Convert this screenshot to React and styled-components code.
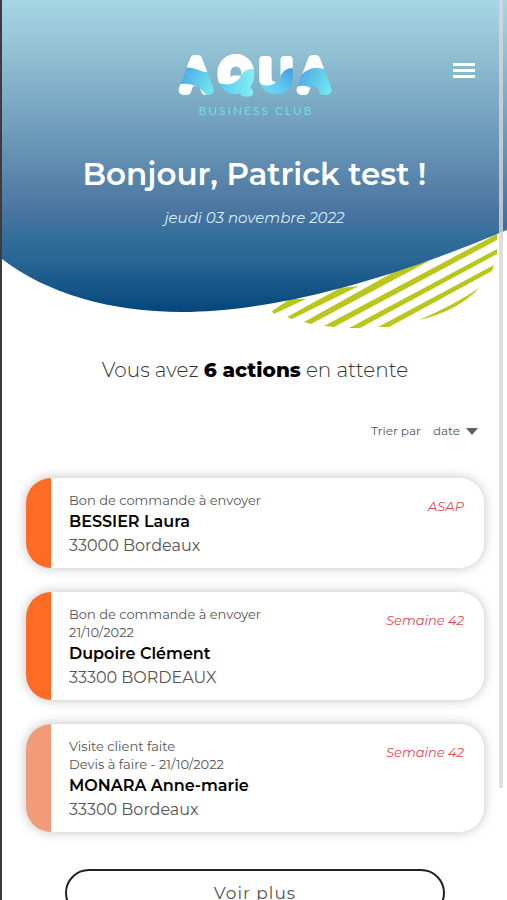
import { useState } from 'react';
import styled, { createGlobalStyle } from 'styled-components';

const actions = [
  {
    id: 1,
    steps: ['Bon de commande à envoyer'],
    name: 'BESSIER Laura',
    city: '33000 Bordeaux',
    due: 'ASAP',
    color: '#fe6b25',
  },
  {
    id: 2,
    steps: ['Bon de commande à envoyer', '21/10/2022'],
    name: 'Dupoire Clément',
    city: '33300 BORDEAUX',
    due: 'Semaine 42',
    color: '#fe6b25',
  },
  {
    id: 3,
    steps: ['Visite client faite', 'Devis à faire - 21/10/2022'],
    name: 'MONARA Anne-marie',
    city: '33300 Bordeaux',
    due: 'Semaine 42',
    color: '#f19b7b',
  },
];

const Logo = () => (
  <LogoSvg viewBox='0 0 156 66' role='img' aria-label='Aqua Business Club'>
    <defs>
      <linearGradient id='wave-blue' x1='0' y1='0' x2='1' y2='0.4'>
        <stop offset='0' stopColor='#4a9de0' />
        <stop offset='1' stopColor='#6fe6f2' />
      </linearGradient>
      <linearGradient id='wave-cyan' x1='0' y1='0' x2='1' y2='0'>
        <stop offset='0' stopColor='#56c8ea' />
        <stop offset='1' stopColor='#85f0f6' />
      </linearGradient>
      <linearGradient id='wave-deep' x1='0' y1='1' x2='1' y2='0'>
        <stop offset='0' stopColor='#78eaf5' />
        <stop offset='0.6' stopColor='#5cc4ee' />
        <stop offset='1' stopColor='#3d97e0' />
      </linearGradient>
      <mask id='logo-letters' maskUnits='userSpaceOnUse' x='0' y='0' width='156' height='50'>
        <LogoLetter x='19' y='38' $font='Roboto' $weight={300} $size={42} $stroke={10}>A</LogoLetter>
        <LogoLetter x='59' y='38' $font='Inter' $weight={500} $size={44} $stroke={8}>Q</LogoLetter>
        <LogoLetter x='99' y='38' $font='Montserrat' $weight={500} $size={43} $stroke={8}>U</LogoLetter>
        <LogoLetter x='137' y='38' $font='Roboto' $weight={300} $size={42} $stroke={10}>A</LogoLetter>
      </mask>
    </defs>
    <g mask='url(#logo-letters)'>
      <rect width='156' height='50' fill='#fff' />
      <path d='M0 20C8 12 18 17 24 19S34 20 39 17V50H34C28 38 16 28 0 33Z' fill='url(#wave-blue)' />
      <path d='M38 29C47 34 58 34 64 24C68 17 74 16 79 18V50H38Z' fill='url(#wave-cyan)' />
      <path d='M79 30C90 36 98 34 103 25C107 17 112 15 118 17V50H79Z' fill='url(#wave-deep)' />
      <path d='M118 26C126 23 130 15 140 16S150 18 156 18V50H148C140 37 128 30 118 36Z' fill='url(#wave-blue)' />
    </g>
    <LogoTagline x='79' y='63'>BUSINESS CLUB</LogoTagline>
  </LogoSvg>
);

const HeaderShape = () => (
  <HeaderSvg viewBox='0 0 505 330' preserveAspectRatio='none' aria-hidden='true'>
    <defs>
      <linearGradient id='header-sky' gradientUnits='userSpaceOnUse' x1='0' y1='0' x2='0' y2='312'>
        <stop offset='0' stopColor='#a5d6e3' />
        <stop offset='0.12' stopColor='#98c7d8' />
        <stop offset='0.45' stopColor='#6a98b8' />
        <stop offset='0.69' stopColor='#48739f' />
        <stop offset='0.75' stopColor='#35709b' />
        <stop offset='0.84' stopColor='#286594' />
        <stop offset='1' stopColor='#04467c' />
      </linearGradient>
    </defs>
    <g fill='#b9c71c'>
      <path d='M270 311L272 314L304 299L288 299Z' />
      <path d='M285 317L290 319L357 286L338 288Z' />
      <path d='M302 322L309 324L427 261L401 267Z' />
      <path d='M322 326L332 327L495 240V234Z' />
      <path d='M347 328H358L495 254V249Z' />
      <path d='M376 327H387L490 271L492 265Z' />
      <path d='M417 320Q452 305 477 288Q456 311 417 320Z' />
    </g>
    <path d='M0 0H505V230C358 292 252 312 180 312C108 312 44 293 0 259Z' fill='url(#header-sky)' />
  </HeaderSvg>
);

const ActionCard = ({ steps, name, city, due, color }) => (
  <Card $color={color}>
    <div>
      {steps.map(step => (
        <CardStep key={step}>{step}</CardStep>
      ))}
      <CardName>{name}</CardName>
      <CardCity>{city}</CardCity>
    </div>
    <CardDue>{due}</CardDue>
  </Card>
);

const App = () => {
  const [sort, setSort] = useState('date');

  return (
    <>
      <GlobalStyle />
      <Page>
        <Header>
          <HeaderShape />
          <TopBar>
            <Logo />
            <MenuButton type='button' aria-label='Menu'>
              <svg width='22' height='15' viewBox='0 0 22 15' fill='currentColor'>
                <rect width='22' height='3' />
                <rect y='6' width='22' height='3' />
                <rect y='12' width='22' height='3' />
              </svg>
            </MenuButton>
          </TopBar>
          <Title>Bonjour, Patrick test !</Title>
          <Today>jeudi 03 novembre 2022</Today>
        </Header>
        <Main>
          <Summary>
            Vous avez <strong>6 actions</strong> en attente
          </Summary>
          <SortBar>
            <label htmlFor='sort'>Trier par</label>
            <SortField>
              <SortSelect
                id='sort'
                value={sort}
                onChange={({ target }) => setSort(target.value)}
              >
                <option value='date'>date</option>
                <option value='nom'>nom</option>
              </SortSelect>
              <svg width='12' height='7' viewBox='0 0 12 7' fill='#606060'>
                <path d='M0 0H12L6 7Z' />
              </svg>
            </SortField>
          </SortBar>
          <CardList>
            {actions.map(action => (
              <ActionCard key={action.id} {...action} />
            ))}
          </CardList>
          <MoreButton type='button'>Voir plus</MoreButton>
        </Main>
        <ScrollThumb />
      </Page>
    </>
  );
};

const GlobalStyle = createGlobalStyle`
  * {
    box-sizing: border-box;
  }

  html {
    scrollbar-width: none;
  }

  body {
    margin: 0;
    background: #fff;
    color: #555;
    font-family: 'Montserrat', 'Inter', sans-serif;
  }

  h1, h2, p, ul {
    margin: 0;
    padding: 0;
  }

  button, select {
    font-family: inherit;
    color: inherit;
  }
`;

const Page = styled.div`
  min-height: 100vh;
  border-left: 2px solid #3b3b40;
`;

const Header = styled.header`
  position: relative;
  height: 330px;
  padding-top: 52px;
  color: #fff;
  text-align: center;
`;

const HeaderSvg = styled.svg`
  position: absolute;
  inset: 0;
  width: 100%;
  height: 100%;
`;

const TopBar = styled.div`
  position: relative;
  display: grid;
  grid-template-columns: 1fr auto 1fr;
  align-items: start;
  padding: 0 24px;
`;

const LogoSvg = styled.svg`
  grid-column: 2;
  width: 156px;
  height: 66px;
`;

const LogoLetter = styled.text`
  font-family: '${({ $font }) => $font}', sans-serif;
  font-size: ${({ $size }) => $size}px;
  font-weight: ${({ $weight }) => $weight};
  text-anchor: middle;
  fill: #fff;
  stroke: #fff;
  stroke-width: ${({ $stroke }) => $stroke}px;
  stroke-linejoin: round;
`;

const LogoTagline = styled.text`
  font-family: 'Lato', sans-serif;
  font-size: 12px;
  letter-spacing: 2px;
  text-anchor: middle;
  fill: #6fdde8;
`;

const MenuButton = styled.button`
  justify-self: end;
  display: flex;
  padding: 8px;
  margin-top: 3px;
  border: none;
  background: none;
  color: #fff;
  cursor: pointer;
`;

const Title = styled.h1`
  position: relative;
  margin-top: 36px;
  font-size: 31px;
  line-height: 40px;
  font-weight: 600;
`;

const Today = styled.p`
  position: relative;
  margin-top: 12px;
  font-size: 15px;
  line-height: 24px;
  font-style: italic;
  color: #d8ebfa;
`;

const Main = styled.main`
  display: flex;
  flex-direction: column;
  padding: 26px 23px 24px 24px;
`;

const Summary = styled.h2`
  font-size: 20px;
  line-height: 28px;
  font-weight: 300;
  color: #333;
  text-align: center;

  & strong {
    font-weight: 800;
    color: #000;
  }
`;

const SortBar = styled.div`
  display: flex;
  justify-content: flex-end;
  align-items: center;
  gap: 12px;
  margin-top: 37px;
  padding-right: 6px;
  font-size: 12px;
  line-height: 20px;
`;

const SortField = styled.div`
  display: flex;
  align-items: center;
  position: relative;

  & svg {
    position: absolute;
    right: 0;
    pointer-events: none;
  }
`;

const SortSelect = styled.select`
  appearance: none;
  field-sizing: content;
  border: none;
  padding: 0 18px 0 0;
  background: transparent;
  font-size: 12px;
  line-height: 20px;
  cursor: pointer;
`;

const CardList = styled.ul`
  display: flex;
  flex-direction: column;
  gap: 24px;
  margin-top: 37px;
  list-style: none;
`;

const Card = styled.li`
  display: flex;
  justify-content: space-between;
  padding: 13px 20px 11px 43px;
  border-radius: 25px;
  background: linear-gradient(to right, ${({ $color }) => $color} 25px, #fff 25px);
  box-shadow: 0 0 12px rgba(0, 0, 0, 0.25);
`;

const CardStep = styled.p`
  font-size: 13px;
  line-height: 18px;
`;

const CardName = styled.p`
  font-size: 16px;
  line-height: 26px;
  font-weight: 600;
  color: #000;
`;

const CardCity = styled.p`
  font-size: 16px;
  line-height: 22px;
`;

const CardDue = styled.p`
  margin-top: 3px;
  font-size: 13px;
  line-height: 24px;
  font-style: italic;
  color: #e0474c;
`;

const MoreButton = styled.button`
  margin: 37px 39px 0;
  height: 48px;
  border: 2px solid #222;
  border-radius: 24px;
  background: #fff;
  font-size: 17px;
  letter-spacing: 1px;
  cursor: pointer;
`;

const ScrollThumb = styled.div`
  position: fixed;
  top: 0;
  right: 4px;
  width: 4px;
  height: 87.5vh;
  background: rgba(215, 215, 218, 0.8);
`;

export default App;
